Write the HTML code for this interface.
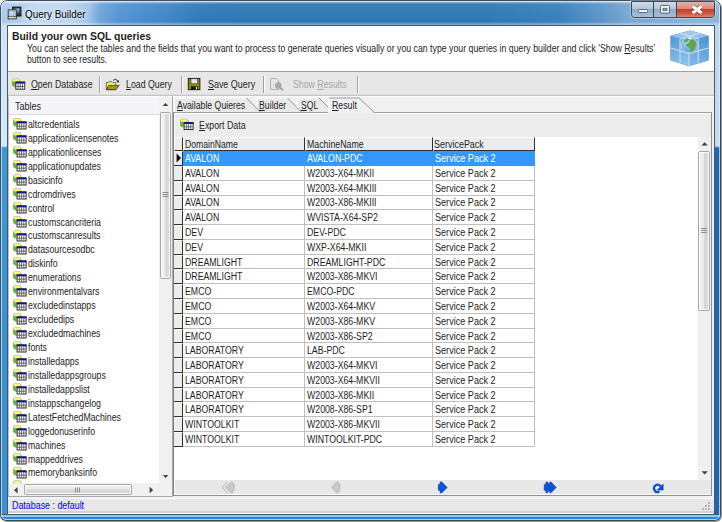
<!DOCTYPE html>
<html><head><meta charset="utf-8"><title>Query Builder</title>
<style>
html,body{margin:0;padding:0;background:#fff;width:722px;height:522px;overflow:hidden}
body{font-family:"Liberation Sans",sans-serif;font-size:10px;color:#1e1e1e;position:relative}
*{box-sizing:border-box}
.abs{position:absolute}
i{position:absolute;display:block}
u{text-decoration:underline;text-underline-offset:1px;text-decoration-thickness:1px}
.t{position:absolute;white-space:pre;line-height:12px;height:12px;transform-origin:0 50%}
#win{position:absolute;left:0;top:0;width:721px;height:521px;border-radius:7px 7px 6px 6px;overflow:hidden;
 background:linear-gradient(90deg,#a8c9ea 0,#b2cfec 18px,#c0d8f0 36px,#bcd5ef 70px,#a2c5e8 88px,#6ea5dc 100px,#5593d2 120px,#4288c9 160px,#3079b8 200px,#2c77b3 240px,#2c77b3 480px,#3a80bc 560px,#5a94c8 600px,#7aa8d2 630px,#8fb6dc 722px);box-shadow:1px 1px 0 #8a949e}
#tgloss{left:0;top:0;width:721px;height:26px;background:linear-gradient(180deg,rgba(255,255,255,.5) 0,rgba(255,255,255,.5) 2px,rgba(255,255,255,.06) 4px,rgba(255,255,255,0) 22px,rgba(255,255,255,.35) 24px,rgba(255,255,255,.35) 25px)}
#frameL{left:0;top:26px;width:8px;height:495px;background:linear-gradient(180deg,#cfe3f5 0,#d6e8f7 118px,#d0e6f6 120px,#3a98d8 122px,#3492d6 100%)}
#frameR{left:714px;top:26px;width:7px;height:495px;background:linear-gradient(180deg,#bcd4ec 0,#c8dcf0 118px,#c4daf0 120px,#1c6ab6 122px,#1a68b4 100%);border-left:1px solid #6aa0d8}
#frameB{left:0;top:514px;width:721px;height:7px;background:linear-gradient(180deg,#90c8f0 0,#90c8f0 1.5px,#2a88d8 2px,#2a88d8 4.5px,#b8d4f0 5px,#b8d4f0 6px);border-top:1px solid #46586a}
#edge{left:0;top:0;width:721px;height:521px;border:1px solid #3f4d5b;border-radius:7px 7px 6px 6px}
#edge2{left:1px;top:1px;width:719px;height:519px;border:1px solid rgba(225,242,255,.7);border-radius:6px 6px 5px 5px}
#client{left:8px;top:26px;width:706px;height:488px;background:#f0f0f0;outline:1px solid #46586a}
#hdr{left:8px;top:26px;width:706px;height:45px;background:#fff}
#hline{left:8px;top:71px;width:706px;height:1px;background:#a0a0a0}
#tb{left:8px;top:72px;width:706px;height:22px;background:#e7e7e7}
#tbline{left:8px;top:94px;width:706px;height:3px;background:linear-gradient(180deg,#dedede 0,#dedede 1px,#c6c6c6 1px,#c6c6c6 2px,#fbfbfb 2px)}
.sep{position:absolute;top:76px;width:2px;height:17px;border-left:1px solid #a0a0a0;border-right:1px solid #fff}
/* caption buttons */
#cap{left:631px;top:1px;width:84px;height:17px;border:1px solid #3a4a5c;border-radius:0 0 4px 4px;overflow:hidden;box-shadow:0 0 0 1px rgba(255,255,255,.3)}
#cap i{top:0;height:15px}
#bmin{left:0;width:22px;background:linear-gradient(180deg,#d0dcea 0,#b6c6da 45%,#94aac6 50%,#a8bed8 100%);border-right:1px solid #37485a}
#bmax{left:22px;width:23px;background:linear-gradient(180deg,#d0dcea 0,#b6c6da 45%,#94aac6 50%,#a8bed8 100%);border-right:1px solid #37485a}
#bcls{left:45px;width:38px;background:linear-gradient(180deg,#e6b4a8 0,#d98a78 45%,#c6412c 50%,#cf553e 75%,#dc8468 100%)}
/* left panel */
#lp{left:8px;top:96px;width:165px;height:401px;background:#fff;border:1px solid #a8a8a8;border-left-color:#c0c0c0;border-top-color:#fff}
#lphdr{left:9px;top:97px;width:150px;height:18px;background:#f4f4fa;border-bottom:1px solid #dcdce4}
.vtrack{background:#f0f0f0}
.thumbv{border:1px solid #a6a6a6;border-radius:2px;background:linear-gradient(90deg,#f4f4f4 0,#e9e9e9 45%,#d6d6d6 55%,#dadada 100%);box-shadow:inset 0 0 0 1px #fff}
.thumbh{border:1px solid #a6a6a6;border-radius:2px;background:linear-gradient(180deg,#f4f4f4 0,#e9e9e9 45%,#d6d6d6 55%,#dadada 100%);box-shadow:inset 0 0 0 1px #fff}
/* right panel */
#rp{left:173px;top:112px;width:539px;height:384px;background:#ececec;border:1px solid #8a9292;border-left-color:#7a8282;border-top-color:#a0a0a0;box-shadow:inset 1px 0 0 #fff,inset 0 -1px 0 #fafafa}
#rphl{left:174px;top:113px;width:537px;height:1px;background:#fff}
#grid{left:174px;top:137px;width:524px;height:343px;background:#fff}
#gl{left:174px;top:137px;width:0;height:343px}
.gh{position:absolute;top:137px;height:14px;background:#ececec;border-right:1px solid #303030;border-bottom:1px solid #303030;border-left:1px solid #fff;border-top:1px solid #fff}
.grow{left:174px;width:361px}
.grow i{top:0;height:100%;border-right:1px solid #c0c0c0;border-bottom:1px solid #c0c0c0;background:#fff}
.grow .ind{left:0;width:9px;background:#ececec;border-right:1px solid #303030;border-bottom:1px solid #303030;border-top:1px solid #fff}
.grow .c1{left:9px;width:122px}
.grow .c2{left:131px;width:128px}
.grow .c3{left:259px;width:102px}
.grow.sel .c1,.grow.sel .c2,.grow.sel .c3{background:#3399ff;border-color:#3399ff}
#nav{left:175px;top:480px;width:536px;height:14px;background:#e8e8e8}
#sb{left:8px;top:498px;width:706px;height:16px;background:#e7e7e7;border-top:1px solid #fafafa;border-bottom:1px solid #fff;box-shadow:inset 0 -2px 0 #d2d2d2}
</style></head><body>
<svg width="0" height="0" style="position:absolute">
 <symbol id="dbt" viewBox="0 0 14 12">
  <path d="M0.4 2 L0.4 6.6 A3.8 1.8 0 0 0 8 6.6 L8 2 Z" fill="#f2ea38" stroke="#7f8aa0" stroke-width=".7"/>
  <path d="M0.5 2.4 L0.5 6.6 A3.8 1.8 0 0 0 3.4 8.2 L3.4 3.7 Z" fill="#58bb38"/>
  <ellipse cx="4.2" cy="2" rx="3.8" ry="1.8" fill="#ffff5c" stroke="#9aa0b0" stroke-width=".6"/>
  <rect x="4.1" y="3.9" width="9" height="7.1" fill="#fff" stroke="#181818" stroke-width=".9"/>
  <rect x="3.7" y="3.5" width="9.8" height="1.9" fill="#0c1a86"/>
  <path d="M4.5 8.2H12.7M6.4 5.4V10.6M8.6 5.4V10.6M10.8 5.4V10.6" stroke="#383838" stroke-width=".7" fill="none"/>
 </symbol>
</svg>
<div id="win">
 <div class="abs" id="tgloss"></div>
 <div class="abs" id="frameL"></div><div class="abs" id="frameR"></div><div class="abs" id="frameB"></div>
 <div class="abs" id="edge"></div><div class="abs" id="edge2"></div>
 <div class="abs" id="client"></div>
 <div class="abs" id="hdr"></div><div class="abs" id="hline"></div>
 <div class="abs" id="tb"></div><div class="abs" id="tbline"></div>
 <div class="sep" style="left:99px"></div><div class="sep" style="left:181px"></div><div class="sep" style="left:263px"></div><div class="sep" style="left:357px"></div>
 <div class="abs" id="cap"><i id="bmin"></i><i id="bmax"></i><i id="bcls"></i></div>

 <!-- left panel -->
 <div class="abs" id="lp"></div>
 <div class="abs" id="lphdr"></div>
<svg class="abs" style="left:12.6px;top:118.00px" width="14" height="12" viewBox="0 0 14 12"><use href="#dbt"/></svg>
<svg class="abs" style="left:12.6px;top:131.94px" width="14" height="12" viewBox="0 0 14 12"><use href="#dbt"/></svg>
<svg class="abs" style="left:12.6px;top:145.88px" width="14" height="12" viewBox="0 0 14 12"><use href="#dbt"/></svg>
<svg class="abs" style="left:12.6px;top:159.82px" width="14" height="12" viewBox="0 0 14 12"><use href="#dbt"/></svg>
<svg class="abs" style="left:12.6px;top:173.76px" width="14" height="12" viewBox="0 0 14 12"><use href="#dbt"/></svg>
<svg class="abs" style="left:12.6px;top:187.70px" width="14" height="12" viewBox="0 0 14 12"><use href="#dbt"/></svg>
<svg class="abs" style="left:12.6px;top:201.64px" width="14" height="12" viewBox="0 0 14 12"><use href="#dbt"/></svg>
<svg class="abs" style="left:12.6px;top:215.58px" width="14" height="12" viewBox="0 0 14 12"><use href="#dbt"/></svg>
<svg class="abs" style="left:12.6px;top:229.52px" width="14" height="12" viewBox="0 0 14 12"><use href="#dbt"/></svg>
<svg class="abs" style="left:12.6px;top:243.46px" width="14" height="12" viewBox="0 0 14 12"><use href="#dbt"/></svg>
<svg class="abs" style="left:12.6px;top:257.40px" width="14" height="12" viewBox="0 0 14 12"><use href="#dbt"/></svg>
<svg class="abs" style="left:12.6px;top:271.34px" width="14" height="12" viewBox="0 0 14 12"><use href="#dbt"/></svg>
<svg class="abs" style="left:12.6px;top:285.28px" width="14" height="12" viewBox="0 0 14 12"><use href="#dbt"/></svg>
<svg class="abs" style="left:12.6px;top:299.22px" width="14" height="12" viewBox="0 0 14 12"><use href="#dbt"/></svg>
<svg class="abs" style="left:12.6px;top:313.16px" width="14" height="12" viewBox="0 0 14 12"><use href="#dbt"/></svg>
<svg class="abs" style="left:12.6px;top:327.10px" width="14" height="12" viewBox="0 0 14 12"><use href="#dbt"/></svg>
<svg class="abs" style="left:12.6px;top:341.04px" width="14" height="12" viewBox="0 0 14 12"><use href="#dbt"/></svg>
<svg class="abs" style="left:12.6px;top:354.98px" width="14" height="12" viewBox="0 0 14 12"><use href="#dbt"/></svg>
<svg class="abs" style="left:12.6px;top:368.92px" width="14" height="12" viewBox="0 0 14 12"><use href="#dbt"/></svg>
<svg class="abs" style="left:12.6px;top:382.86px" width="14" height="12" viewBox="0 0 14 12"><use href="#dbt"/></svg>
<svg class="abs" style="left:12.6px;top:396.80px" width="14" height="12" viewBox="0 0 14 12"><use href="#dbt"/></svg>
<svg class="abs" style="left:12.6px;top:410.74px" width="14" height="12" viewBox="0 0 14 12"><use href="#dbt"/></svg>
<svg class="abs" style="left:12.6px;top:424.68px" width="14" height="12" viewBox="0 0 14 12"><use href="#dbt"/></svg>
<svg class="abs" style="left:12.6px;top:438.62px" width="14" height="12" viewBox="0 0 14 12"><use href="#dbt"/></svg>
<svg class="abs" style="left:12.6px;top:452.56px" width="14" height="12" viewBox="0 0 14 12"><use href="#dbt"/></svg>
<svg class="abs" style="left:12.6px;top:466.50px" width="14" height="12" viewBox="0 0 14 12"><use href="#dbt"/></svg>
<svg class="abs" style="left:12.6px;top:480.44px" width="14" height="12" viewBox="0 0 14 12"><use href="#dbt"/></svg>
 <div class="abs vtrack" style="left:159px;top:97px;width:13px;height:399px"></div>
 <div class="abs thumbv" style="left:160px;top:112px;width:11px;height:167px"></div>
 <div class="abs vtrack" style="left:9px;top:483px;width:150px;height:13px"></div>
 <div class="abs thumbh" style="left:24px;top:484px;width:108px;height:11px"></div>

 <!-- right panel -->
 <div class="abs" id="rp"></div><div class="abs" id="rphl"></div>
 <div class="abs" id="grid"></div>
 <div class="abs vtrack" style="left:698px;top:137px;width:13px;height:343px"></div>
 <div class="abs thumbv" style="left:698px;top:151px;width:12px;height:160px"></div>
 <div class="gh" style="left:174px;width:9px"></div>
 <div class="gh" style="left:183px;width:122px"></div>
 <div class="gh" style="left:305px;width:128px"></div>
 <div class="gh" style="left:433px;width:102px"></div>
<div class="abs grow sel" style="top:151px;height:15px"><i class="ind"></i><i class="c1"></i><i class="c2"></i><i class="c3"></i></div>
<div class="abs grow" style="top:166px;height:15px"><i class="ind"></i><i class="c1"></i><i class="c2"></i><i class="c3"></i></div>
<div class="abs grow" style="top:181px;height:15px"><i class="ind"></i><i class="c1"></i><i class="c2"></i><i class="c3"></i></div>
<div class="abs grow" style="top:196px;height:14px"><i class="ind"></i><i class="c1"></i><i class="c2"></i><i class="c3"></i></div>
<div class="abs grow" style="top:210px;height:15px"><i class="ind"></i><i class="c1"></i><i class="c2"></i><i class="c3"></i></div>
<div class="abs grow" style="top:225px;height:15px"><i class="ind"></i><i class="c1"></i><i class="c2"></i><i class="c3"></i></div>
<div class="abs grow" style="top:240px;height:15px"><i class="ind"></i><i class="c1"></i><i class="c2"></i><i class="c3"></i></div>
<div class="abs grow" style="top:255px;height:14px"><i class="ind"></i><i class="c1"></i><i class="c2"></i><i class="c3"></i></div>
<div class="abs grow" style="top:269px;height:15px"><i class="ind"></i><i class="c1"></i><i class="c2"></i><i class="c3"></i></div>
<div class="abs grow" style="top:284px;height:15px"><i class="ind"></i><i class="c1"></i><i class="c2"></i><i class="c3"></i></div>
<div class="abs grow" style="top:299px;height:15px"><i class="ind"></i><i class="c1"></i><i class="c2"></i><i class="c3"></i></div>
<div class="abs grow" style="top:314px;height:15px"><i class="ind"></i><i class="c1"></i><i class="c2"></i><i class="c3"></i></div>
<div class="abs grow" style="top:329px;height:14px"><i class="ind"></i><i class="c1"></i><i class="c2"></i><i class="c3"></i></div>
<div class="abs grow" style="top:343px;height:15px"><i class="ind"></i><i class="c1"></i><i class="c2"></i><i class="c3"></i></div>
<div class="abs grow" style="top:358px;height:15px"><i class="ind"></i><i class="c1"></i><i class="c2"></i><i class="c3"></i></div>
<div class="abs grow" style="top:373px;height:15px"><i class="ind"></i><i class="c1"></i><i class="c2"></i><i class="c3"></i></div>
<div class="abs grow" style="top:388px;height:14px"><i class="ind"></i><i class="c1"></i><i class="c2"></i><i class="c3"></i></div>
<div class="abs grow" style="top:402px;height:15px"><i class="ind"></i><i class="c1"></i><i class="c2"></i><i class="c3"></i></div>
<div class="abs grow" style="top:417px;height:15px"><i class="ind"></i><i class="c1"></i><i class="c2"></i><i class="c3"></i></div>
<div class="abs grow" style="top:432px;height:15px"><i class="ind"></i><i class="c1"></i><i class="c2"></i><i class="c3"></i></div>
 <div class="abs" id="nav"></div>
 <div class="abs" id="sb"></div>

 <!-- overlay graphics -->
 <svg class="abs" style="left:0;top:0" width="722" height="522" viewBox="0 0 722 522">
  <!-- title icon -->
  <g>
   <rect x="12.4" y="7" width="8.6" height="8.8" fill="#2c343c" stroke="#14181c" stroke-width=".8"/>
   <rect x="14" y="8.4" width="5.4" height="4.8" fill="#58799f"/>
   <rect x="16.4" y="8.4" width="3" height="2.4" fill="#8fb0d4"/>
   <rect x="8.2" y="9.9" width="8" height="8.9" fill="#dfe3e7" stroke="#262c32" stroke-width=".9"/>
   <rect x="9.4" y="11" width="5.6" height="5" fill="#9cc6f0"/>
   <rect x="10.4" y="12" width="2.4" height="2.4" fill="#d4e8fa"/>
   <rect x="8.2" y="16.6" width="8" height="2.2" fill="#e6e6e6" stroke="#262c32" stroke-width=".6"/>
   <rect x="13.6" y="17.2" width="1.3" height="1" fill="#40c040"/><rect x="17" y="17" width="1.3" height="1" fill="#e0c020"/>
   <path d="M16.6 16H21.2V15.4" stroke="#14181c" stroke-width=".9" fill="none"/>
  </g>
  <!-- caption glyphs -->
  <rect x="638.5" y="9.5" width="9" height="3" rx=".8" fill="#fff" stroke="#4a5a6c" stroke-width=".9"/>
  <rect x="660.5" y="5.5" width="9" height="7.5" rx=".8" fill="#fff" stroke="#4a5a6c" stroke-width=".9"/>
  <rect x="663" y="8.2" width="4" height="2.4" fill="#8fabc9" stroke="#4a5a6c" stroke-width=".8"/>
  <path d="M692.6 6.2L701.6 13M701.6 6.2L692.6 13" stroke="#703832" stroke-width="4.6" fill="none" stroke-linecap="butt" opacity=".55"/>
  <path d="M692.6 6.2L701.6 13M701.6 6.2L692.6 13" stroke="#fff" stroke-width="3" fill="none" stroke-linecap="butt"/>
  <!-- cube -->
  <g>
   <linearGradient id="cgl" x1="0" y1="0" x2="0.3" y2="1"><stop offset="0" stop-color="#4f97d8"/><stop offset="1" stop-color="#86c0ee"/></linearGradient>
   <linearGradient id="cgr" x1="1" y1="0" x2="0.6" y2="1"><stop offset="0" stop-color="#4a90d2"/><stop offset="1" stop-color="#7bb6e8"/></linearGradient>
   <linearGradient id="cgt" x1="0" y1="0" x2="0" y2="1"><stop offset="0" stop-color="#a4d0f2"/><stop offset="1" stop-color="#78b4e6"/></linearGradient>
   <radialGradient id="cgg" cx=".4" cy=".35" r=".7"><stop offset="0" stop-color="#a8dcf8"/><stop offset="1" stop-color="#4f9edc"/></radialGradient>
   <path d="M690.2 30.8L708.3 36L708.3 60.2L689 65.8L670.8 60.2L670.8 36Z" fill="#5c9fd8" stroke="#8fa8c0" stroke-width="1"/>
   <path d="M690.2 30.8L708.3 36L689 41.6L670.8 36Z" fill="url(#cgt)"/>
   <path d="M670.8 36L689 41.6L689 65.8L670.8 60.2Z" fill="url(#cgl)"/>
   <path d="M689 41.6L708.3 36L708.3 60.2L689 65.8Z" fill="url(#cgr)"/>
   <path d="M670.8 48L689 53.6L708.3 48M680 38.8V63M698.2 38.8V63M689 41.6V65.8M680.5 33.4L698.6 38.8M699.2 33.4L680 38.8" stroke="#d2dce6" stroke-width="1.1" fill="none"/>
   <circle cx="689.3" cy="45" r="8.1" fill="url(#cgg)" stroke="#c4ccd4" stroke-width="1"/>
   <path d="M684.6 40C686.4 38.4 688.4 38.2 689.6 39.2C688.8 40.6 687.2 41.4 685.8 42.6C684.8 43.2 683.8 42 684.6 40Z" fill="#5fa544"/>
   <path d="M690.6 39.6C692.4 39 694.4 40 695.6 41.8C696.6 43.6 696.2 45.6 695 46.6C694.4 48.6 693.6 50.6 691.8 52C690.4 51.6 689.8 50 689.8 48.6C689.2 47.2 687.2 47 686.2 45.8C686 44.2 687.6 43 689 42.6C689.8 41.6 689.8 40.4 690.6 39.6Z" fill="#5fa544"/>
   <path d="M687.4 37.9C689 37.3 691 37.4 692.2 38.2L689.8 39.2Z" fill="#fff" opacity=".9"/>
  </g>
  <!-- toolbar icons: open database -->
  <svg x="11.7" y="78.2" width="14" height="12" viewBox="0 0 14 12"><use href="#dbt"/></svg>
  <!-- load query (folder) -->
  <g>
   <path d="M106.3 82.6H108L109 81.8H112L112.8 82.6H115.8V89.6H106.3Z" fill="#f6f270" stroke="#3a3a20" stroke-width=".7"/>
   <path d="M108.6 85.4H119.2L116 89.7H106.4Z" fill="#9c9a1c" stroke="#2a2a10" stroke-width=".7"/>
   <path d="M113 80.4C114.6 78.8 117 79.2 118 81.4" stroke="#202020" stroke-width=".9" fill="none"/>
   <path d="M116.4 81.6L118.6 82.8L119 80.2Z" fill="#202020"/>
  </g>
  <!-- save query (floppy) -->
  <g>
   <rect x="188.3" y="78.4" width="11.6" height="11.3" fill="#8e8a14" stroke="#101008" stroke-width=".9"/>
   <rect x="191" y="78.8" width="6.6" height="5" fill="#e6e6e6" stroke="#202010" stroke-width=".5"/>
   <rect x="191" y="86.4" width="7" height="3.2" fill="#101010"/>
   <rect x="195.8" y="87" width="1.3" height="2.2" fill="#f0f0f0"/>
  </g>
  <!-- show results (disabled) -->
  <g>
   <path d="M270.6 78.6H276L278.6 81.2V89.4H270.6Z" fill="#ececec" stroke="#a4a4a4" stroke-width=".9"/>
   <path d="M273.4 81V88" stroke="#b8b8b8" stroke-width=".8" stroke-dasharray="1.2 1"/>
   <circle cx="278.2" cy="85.4" r="3" fill="#ababab" stroke="#9a9a9a" stroke-width=".6"/>
   <path d="M280.2 87.6L283 90.4" stroke="#9a9a9a" stroke-width="1.6"/>
  </g>
  <!-- tabs -->
  <g stroke-width="1" fill="#e9e9e9">
   <path d="M297 112V98H319L333 112Z" stroke="none"/>
   <path d="M297.5 112V98H319" stroke="#fff" fill="none"/><path d="M319 98L333 112" stroke="#8b9492" fill="none"/>
   <path d="M256 112V98H287.5L301.5 112Z" stroke="none"/>
   <path d="M256.5 112V98H287.5" stroke="#fff" fill="none"/><path d="M287.5 98L301.5 112" stroke="#8b9492" fill="none"/>
   <path d="M174 112V98H246.4L260.4 112Z" stroke="none"/>
   <path d="M174.5 112V98H246.4" stroke="#fff" fill="none"/><path d="M246.4 98L260.4 112" stroke="#8b9492" fill="none"/>
   <path d="M328.5 114V97.6H359L375.6 114Z" fill="#f0f0f0" stroke="none"/>
   <path d="M329 113.5V98" stroke="#fff" fill="none"/><path d="M329 98H359.2" stroke="#9aa2a2" fill="none"/><path d="M359.2 98L374.4 112.6" stroke="#8b9492" fill="none"/>
  </g>
  <!-- export data icon -->
  <svg x="180" y="118.6" width="14" height="12" viewBox="0 0 14 12"><use href="#dbt"/></svg>
  <!-- row indicator -->
  <path d="M176.6 153.6L181 158L176.6 162.4Z" fill="#000"/>
  <!-- scroll arrows -->
  <g fill="#404040">
   <path d="M165.5 103L168.4 106H162.6Z"/><path d="M165.6 478L168.4 475H162.8Z"/>
   <path d="M14 490.2L17.6 487V493.4Z"/><path d="M153.2 490L149.6 486.8V493.2Z"/>
   <path d="M704.6 142.2L707.8 145.6H701.4Z"/><path d="M704.7 474.6L707.9 471.2H701.5Z"/>
  </g>
  <!-- grips -->
  <g stroke="#7a7a7a" stroke-width=".8" fill="none">
   <path d="M162.5 192.5H168.5M162.5 194.5H168.5M162.5 196.5H168.5"/>
   <path d="M701 228.5H707M701 230.5H707M701 232.5H707"/>
   <path d="M75.5 487.5V492.5M77.5 487.5V492.5M79.5 487.5V492.5"/>
  </g>
  <!-- nav icons -->
  <g>
   <path d="M227.4 482.2L222 487.4L227.4 492.6" stroke="#b0b0b0" stroke-width="1" fill="none"/>
   <path d="M225.5 487.4L231 482H232.6V484.6H234.2V490.2H232.6V492.8H231Z" fill="#cacaca" stroke="#adadad" stroke-width=".7"/>
   <path d="M331.2 487.4L336.7 482H338.3V484.6H339.9V490.2H338.3V492.8H336.7Z" fill="#cacaca" stroke="#adadad" stroke-width=".7"/>
   <path d="M447.2 487.4L441.7 482H440.1V484.6H438.4V490.2H440.1V492.8H441.7Z" fill="#0c55d6" stroke="#0838b0" stroke-width=".7"/>
   <path d="M552.6 487.4L547.3 482H545.9V484.6H544.2V490.2H545.9V492.8H547.3Z" fill="#0c55d6" stroke="#0838b0" stroke-width=".6"/>
   <path d="M556.2 487.4L551 482H549.8V492.8H551Z" fill="#0c55d6" stroke="#0838b0" stroke-width=".6"/>
   <path d="M660.2 485.9A3.6 3.6 0 1 0 658.6 491.8" stroke="#0c4fcc" stroke-width="2.3" fill="none" stroke-linecap="round"/>
   <path d="M663.2 484V490H657.4Z" fill="#0c4fcc" stroke="#0830a8" stroke-width=".5"/>
  </g>
  <!-- status grip -->
  <g fill="#b4b4b4">
   <rect x="708" y="502" width="2" height="2"/><rect x="708" y="505" width="2" height="2"/><rect x="708" y="508" width="2" height="2"/>
   <rect x="705" y="505" width="2" height="2"/><rect x="705" y="508" width="2" height="2"/><rect x="702" y="508" width="2" height="2"/>
  </g>
 </svg>
<div class="t" style="left:24.6px;top:8.33px;transform:scaleX(0.9355);font-size:10.6px;color:#000;text-shadow:0 0 4px rgba(255,255,255,.9),0 0 7px rgba(255,255,255,.7)">Query Builder</div>
<div class="t" style="left:12.1px;top:30.74px;transform:scaleX(1.0401);font-weight:700">Build your own SQL queries</div>
<div class="t" style="left:26.6px;top:43.34px;transform:scaleX(0.8744)">You can select the tables and the fields that you want to process to generate queries visually or you can type your queries in query builder and click 'Show <u>R</u>esults'</div>
<div class="t" style="left:26.6px;top:53.94px;transform:scaleX(0.8638)">button to see results.</div>
<div class="t" style="left:30.6px;top:78.73px;transform:scaleX(0.8792)"><u>O</u>pen Database</div>
<div class="t" style="left:126.3px;top:78.73px;transform:scaleX(0.8782)"><u>L</u>oad Query</div>
<div class="t" style="left:207.6px;top:78.73px;transform:scaleX(0.8918)"><u>S</u>ave Query</div>
<div class="t" style="left:292.6px;top:78.73px;transform:scaleX(0.8767);color:#a6a6a6">Show <u>R</u>esults</div>
<div class="t" style="left:177.1px;top:99.83px;transform:scaleX(0.8708)"><u>A</u>vailable Quieres</div>
<div class="t" style="left:259.0px;top:99.83px;transform:scaleX(0.8735)"><u>B</u>uilder</div>
<div class="t" style="left:300.6px;top:99.83px;transform:scaleX(0.8593)"><u>S</u>QL</div>
<div class="t" style="left:332.3px;top:99.83px;transform:scaleX(0.8780)"><u>R</u>esult</div>
<div class="t" style="left:198.6px;top:119.63px;transform:scaleX(0.8824)"><u>E</u>xport Data</div>
<div class="t" style="left:14.9px;top:101.33px;transform:scaleX(0.9029)">Tables</div>
<div class="t" style="left:184.9px;top:138.53px;transform:scaleX(0.8619)">DomainName</div>
<div class="t" style="left:306.6px;top:138.53px;transform:scaleX(0.8777)">MachineName</div>
<div class="t" style="left:434.4px;top:138.53px;transform:scaleX(0.8960)">ServicePack</div>
<div class="t" style="left:11.9px;top:499.64px;transform:scaleX(0.8882);color:#0000ff">Database : default</div>
<div class="t" style="left:27.8px;top:118.94px;transform:scaleX(0.8750)">altcredentials</div>
<div class="t" style="left:27.8px;top:132.88px;transform:scaleX(0.8750)">applicationlicensenotes</div>
<div class="t" style="left:27.8px;top:146.81px;transform:scaleX(0.8750)">applicationlicenses</div>
<div class="t" style="left:27.8px;top:160.75px;transform:scaleX(0.8750)">applicationupdates</div>
<div class="t" style="left:27.8px;top:174.69px;transform:scaleX(0.8750)">basicinfo</div>
<div class="t" style="left:27.8px;top:188.63px;transform:scaleX(0.8750)">cdromdrives</div>
<div class="t" style="left:27.8px;top:202.57px;transform:scaleX(0.8750)">control</div>
<div class="t" style="left:27.8px;top:216.51px;transform:scaleX(0.8750)">customscancriteria</div>
<div class="t" style="left:27.8px;top:230.45px;transform:scaleX(0.8750)">customscanresults</div>
<div class="t" style="left:27.8px;top:244.39px;transform:scaleX(0.8750)">datasourcesodbc</div>
<div class="t" style="left:27.8px;top:258.34px;transform:scaleX(0.8750)">diskinfo</div>
<div class="t" style="left:27.8px;top:272.28px;transform:scaleX(0.8750)">enumerations</div>
<div class="t" style="left:27.8px;top:286.22px;transform:scaleX(0.8750)">environmentalvars</div>
<div class="t" style="left:27.8px;top:300.16px;transform:scaleX(0.8750)">excludedinstapps</div>
<div class="t" style="left:27.8px;top:314.10px;transform:scaleX(0.8750)">excludedips</div>
<div class="t" style="left:27.8px;top:328.04px;transform:scaleX(0.8750)">excludedmachines</div>
<div class="t" style="left:27.8px;top:341.98px;transform:scaleX(0.8750)">fonts</div>
<div class="t" style="left:27.8px;top:355.92px;transform:scaleX(0.8750)">installedapps</div>
<div class="t" style="left:27.8px;top:369.86px;transform:scaleX(0.8750)">installedappsgroups</div>
<div class="t" style="left:27.8px;top:383.80px;transform:scaleX(0.8750)">installedappslist</div>
<div class="t" style="left:27.8px;top:397.74px;transform:scaleX(0.8750)">instappschangelog</div>
<div class="t" style="left:27.8px;top:411.68px;transform:scaleX(0.8750)">LatestFetchedMachines</div>
<div class="t" style="left:27.8px;top:425.62px;transform:scaleX(0.8750)">loggedonuserinfo</div>
<div class="t" style="left:27.8px;top:439.56px;transform:scaleX(0.8750)">machines</div>
<div class="t" style="left:27.8px;top:453.50px;transform:scaleX(0.8750)">mappeddrives</div>
<div class="t" style="left:27.8px;top:467.44px;transform:scaleX(0.8750)">memorybanksinfo</div>
<div class="t" style="left:184.9px;top:153.13px;transform:scaleX(0.8750);color:#fff">AVALON</div>
<div class="t" style="left:306.8px;top:153.13px;transform:scaleX(0.8750);color:#fff">AVALON-PDC</div>
<div class="t" style="left:434.6px;top:153.13px;transform:scaleX(0.9085);color:#fff">Service Pack 2</div>
<div class="t" style="left:184.9px;top:167.91px;transform:scaleX(0.8750)">AVALON</div>
<div class="t" style="left:306.8px;top:167.91px;transform:scaleX(0.8750)">W2003-X64-MKII</div>
<div class="t" style="left:434.6px;top:167.91px;transform:scaleX(0.9085)">Service Pack 2</div>
<div class="t" style="left:184.9px;top:182.69px;transform:scaleX(0.8750)">AVALON</div>
<div class="t" style="left:306.8px;top:182.69px;transform:scaleX(0.8750)">W2003-X64-MKIII</div>
<div class="t" style="left:434.6px;top:182.69px;transform:scaleX(0.9085)">Service Pack 2</div>
<div class="t" style="left:184.9px;top:197.47px;transform:scaleX(0.8750)">AVALON</div>
<div class="t" style="left:306.8px;top:197.47px;transform:scaleX(0.8750)">W2003-X86-MKIII</div>
<div class="t" style="left:434.6px;top:197.47px;transform:scaleX(0.9085)">Service Pack 2</div>
<div class="t" style="left:184.9px;top:212.25px;transform:scaleX(0.8750)">AVALON</div>
<div class="t" style="left:306.8px;top:212.25px;transform:scaleX(0.8750)">WVISTA-X64-SP2</div>
<div class="t" style="left:434.6px;top:212.25px;transform:scaleX(0.9085)">Service Pack 2</div>
<div class="t" style="left:184.9px;top:227.03px;transform:scaleX(0.8750)">DEV</div>
<div class="t" style="left:306.8px;top:227.03px;transform:scaleX(0.8750)">DEV-PDC</div>
<div class="t" style="left:434.6px;top:227.03px;transform:scaleX(0.9085)">Service Pack 2</div>
<div class="t" style="left:184.9px;top:241.81px;transform:scaleX(0.8750)">DEV</div>
<div class="t" style="left:306.8px;top:241.81px;transform:scaleX(0.8750)">WXP-X64-MKII</div>
<div class="t" style="left:434.6px;top:241.81px;transform:scaleX(0.9085)">Service Pack 2</div>
<div class="t" style="left:184.9px;top:256.60px;transform:scaleX(0.8750)">DREAMLIGHT</div>
<div class="t" style="left:306.8px;top:256.60px;transform:scaleX(0.8750)">DREAMLIGHT-PDC</div>
<div class="t" style="left:434.6px;top:256.60px;transform:scaleX(0.9085)">Service Pack 2</div>
<div class="t" style="left:184.9px;top:271.38px;transform:scaleX(0.8750)">DREAMLIGHT</div>
<div class="t" style="left:306.8px;top:271.38px;transform:scaleX(0.8750)">W2003-X86-MKVI</div>
<div class="t" style="left:434.6px;top:271.38px;transform:scaleX(0.9085)">Service Pack 2</div>
<div class="t" style="left:184.9px;top:286.16px;transform:scaleX(0.8750)">EMCO</div>
<div class="t" style="left:306.8px;top:286.16px;transform:scaleX(0.8750)">EMCO-PDC</div>
<div class="t" style="left:434.6px;top:286.16px;transform:scaleX(0.9085)">Service Pack 2</div>
<div class="t" style="left:184.9px;top:300.94px;transform:scaleX(0.8750)">EMCO</div>
<div class="t" style="left:306.8px;top:300.94px;transform:scaleX(0.8750)">W2003-X64-MKV</div>
<div class="t" style="left:434.6px;top:300.94px;transform:scaleX(0.9085)">Service Pack 2</div>
<div class="t" style="left:184.9px;top:315.72px;transform:scaleX(0.8750)">EMCO</div>
<div class="t" style="left:306.8px;top:315.72px;transform:scaleX(0.8750)">W2003-X86-MKV</div>
<div class="t" style="left:434.6px;top:315.72px;transform:scaleX(0.9085)">Service Pack 2</div>
<div class="t" style="left:184.9px;top:330.50px;transform:scaleX(0.8750)">EMCO</div>
<div class="t" style="left:306.8px;top:330.50px;transform:scaleX(0.8750)">W2003-X86-SP2</div>
<div class="t" style="left:434.6px;top:330.50px;transform:scaleX(0.9085)">Service Pack 2</div>
<div class="t" style="left:184.9px;top:345.28px;transform:scaleX(0.8750)">LABORATORY</div>
<div class="t" style="left:306.8px;top:345.28px;transform:scaleX(0.8750)">LAB-PDC</div>
<div class="t" style="left:434.6px;top:345.28px;transform:scaleX(0.9085)">Service Pack 2</div>
<div class="t" style="left:184.9px;top:360.06px;transform:scaleX(0.8750)">LABORATORY</div>
<div class="t" style="left:306.8px;top:360.06px;transform:scaleX(0.8750)">W2003-X64-MKVI</div>
<div class="t" style="left:434.6px;top:360.06px;transform:scaleX(0.9085)">Service Pack 2</div>
<div class="t" style="left:184.9px;top:374.84px;transform:scaleX(0.8750)">LABORATORY</div>
<div class="t" style="left:306.8px;top:374.84px;transform:scaleX(0.8750)">W2003-X64-MKVII</div>
<div class="t" style="left:434.6px;top:374.84px;transform:scaleX(0.9085)">Service Pack 2</div>
<div class="t" style="left:184.9px;top:389.62px;transform:scaleX(0.8750)">LABORATORY</div>
<div class="t" style="left:306.8px;top:389.62px;transform:scaleX(0.8750)">W2003-X86-MKII</div>
<div class="t" style="left:434.6px;top:389.62px;transform:scaleX(0.9085)">Service Pack 2</div>
<div class="t" style="left:184.9px;top:404.40px;transform:scaleX(0.8750)">LABORATORY</div>
<div class="t" style="left:306.8px;top:404.40px;transform:scaleX(0.8750)">W2008-X86-SP1</div>
<div class="t" style="left:434.6px;top:404.40px;transform:scaleX(0.9085)">Service Pack 2</div>
<div class="t" style="left:184.9px;top:419.18px;transform:scaleX(0.8750)">WINTOOLKIT</div>
<div class="t" style="left:306.8px;top:419.18px;transform:scaleX(0.8750)">W2003-X86-MKVII</div>
<div class="t" style="left:434.6px;top:419.18px;transform:scaleX(0.9085)">Service Pack 2</div>
<div class="t" style="left:184.9px;top:433.96px;transform:scaleX(0.8750)">WINTOOLKIT</div>
<div class="t" style="left:306.8px;top:433.96px;transform:scaleX(0.8750)">WINTOOLKIT-PDC</div>
<div class="t" style="left:434.6px;top:433.96px;transform:scaleX(0.9085)">Service Pack 2</div>
</div>
</body></html>
